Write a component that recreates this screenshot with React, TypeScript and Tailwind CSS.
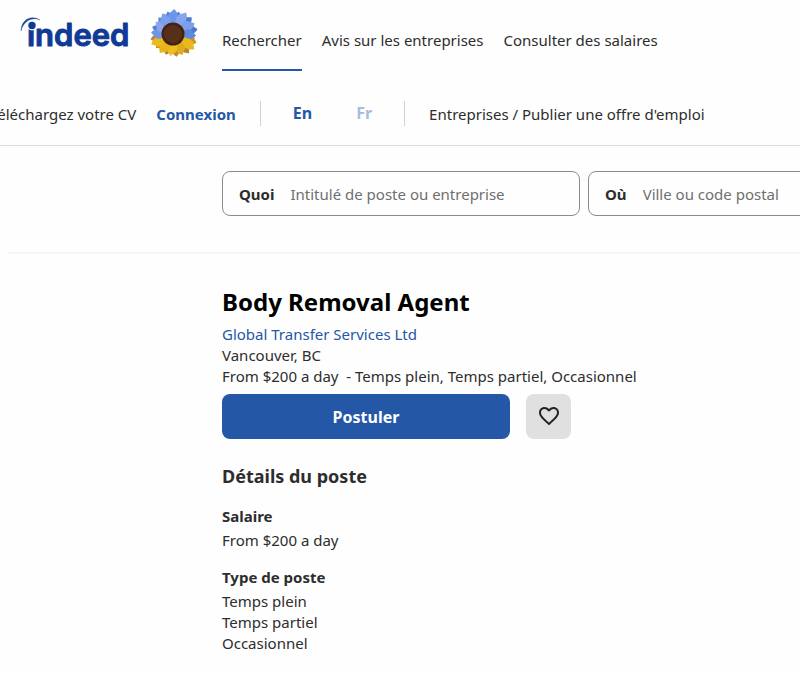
import type { FC } from "react";

// back petals come first so that the lighter front ones overlap them
const petals = [
  { angle: 12, length: 23, color: "#4f7dd6" },
  { angle: 46, length: 25, color: "#4c7ad2" },
  { angle: 76, length: 25, color: "#4f79cf" },
  { angle: 108, length: 25, color: "#c9941f" },
  { angle: 138, length: 25, color: "#bd8438" },
  { angle: 168, length: 23, color: "#c48f24" },
  { angle: 196, length: 22, color: "#b87f33" },
  { angle: 228, length: 22, color: "#c8921d" },
  { angle: 254, length: 23, color: "#b98a3a" },
  { angle: 286, length: 22, color: "#527fd6" },
  { angle: 316, length: 22, color: "#5985d9" },
  { angle: 344, length: 23, color: "#5683da" },
  { angle: 0, length: 25, color: "#6b97ea" },
  { angle: 29, length: 25, color: "#86a6ee" },
  { angle: 61, length: 24, color: "#7c9feb" },
  { angle: 91, length: 23, color: "#5d89df" },
  { angle: 123, length: 26, color: "#e9b81c" },
  { angle: 153, length: 23, color: "#dfac1d" },
  { angle: 183, length: 22, color: "#edc01f" },
  { angle: 212, length: 23, color: "#e6b41c" },
  { angle: 242, length: 24, color: "#ebbb1e" },
  { angle: 271, length: 22, color: "#6f97e6" },
  { angle: 301, length: 21, color: "#8ba6ec" },
  { angle: 330, length: 23, color: "#7b9feb" },
];

const Sunflower: FC = () => (
  <svg className="h-[50px] w-[50px]" viewBox="0 0 50 50" aria-hidden="true">
    {petals.map(({ angle, length, color }) => (
      <path
        key={angle}
        d={`M23 26L18 ${35 - length}Q18 ${30 - length} 21 ${29 - length}L24 ${26 - length}Q28 ${29 - length} 28 ${35 - length}Z`}
        fill={color}
        transform={`rotate(${angle} 23 26)`}
      />
    ))}
    <circle cx="23" cy="26" r="11.5" fill="#45230f" />
    <circle cx="23" cy="26" r="9" fill="#57301c" />
  </svg>
);

const Logo: FC = () => (
  <svg className="h-[40px] w-[110px] overflow-visible" viewBox="0 0 110 40" role="img" aria-label="indeed">
    <text
      x="7"
      y="30"
      fill="#0f3a96"
      stroke="#0f3a96"
      strokeWidth="1"
      strokeLinejoin="round"
      fontFamily="Inter, sans-serif"
      fontWeight="600"
      fontSize="31"
    >
      indeed
    </text>
    <circle cx="12" cy="9.5" r="5" fill="#fefefe" />
    <circle cx="12" cy="9.5" r="3.7" fill="#0f3a96" />
    <path d="M1 15C1 4 11-2 20 4C12 .5 3.5 5 1 15z" fill="#0f3a96" stroke="#0f3a96" strokeWidth="0.3" />
  </svg>
);

const Header: FC = () => (
  <header className="border-b border-[#dcdcdc]">
    <div className="flex h-[74px] items-start pl-5">
      <a href="#accueil" className="flex items-start">
        <span className="pt-4">
          <Logo />
        </span>
        <span className="ml-5 pt-2">
          <Sunflower />
        </span>
      </a>
      <nav className="ml-[22px] flex gap-5 whitespace-nowrap">
        <a href="#rechercher" className="h-[71px] border-b-2 border-[#2557a7] pt-[30px]">Rechercher</a>
        <a href="#avis" className="pt-[30px]">Avis sur les entreprises</a>
        <a href="#salaires" className="pt-[30px]">Consulter des salaires</a>
      </nav>
    </div>
    <div className="flex h-[71px] items-start whitespace-nowrap pt-[27px]">
      <a href="#cv" className="-ml-2.5 pt-[3px]">Téléchargez votre CV</a>
      <a href="#connexion" className="ml-5 pt-[3px] font-bold text-[#2557a7]">Connexion</a>
      <span className="ml-6 h-[25px] w-px bg-[#d4d2d0]" />
      <a href="#en" className="ml-8 pt-0.5 text-base leading-5 font-bold text-[#2557a7]">En</a>
      <a href="#fr" className="ml-11 pt-0.5 text-base leading-5 font-bold text-[#a8bcdc]">Fr</a>
      <span className="ml-8 h-[25px] w-px bg-[#d4d2d0]" />
      <a href="#entreprises" className="ml-6 pt-[3px]">Entreprises / Publier une offre d'emploi</a>
    </div>
  </header>
);

const SearchBar: FC = () => (
  <form className="ml-2 flex gap-2 overflow-hidden border-b-2 border-[#f5f5f5] pt-[25px] pb-9 pl-[214px]">
    <label className="flex h-[45px] w-[358px] shrink-0 items-center gap-4 rounded-lg border border-[#8c8c8c] px-4">
      <span className="font-bold">Quoi</span>
      <input type="text" placeholder="Intitulé de poste ou entreprise" className="min-w-0 flex-1 outline-none placeholder:text-[#6f6f6f]" />
    </label>
    <label className="flex h-[45px] w-[358px] shrink-0 items-center gap-4 rounded-lg border border-[#8c8c8c] px-4">
      <span className="font-bold">Où</span>
      <input type="text" placeholder="Ville ou code postal" className="min-w-0 flex-1 outline-none placeholder:text-[#6f6f6f]" />
    </label>
  </form>
);

const JobPosting: FC = () => (
  <main className="pt-8 pb-4 pl-[222px]">
    <h1 className="text-2xl font-bold text-black">Body Removal Agent</h1>
    <div className="mt-1.5 leading-[21px]">
      <p><a href="#entreprise" className="text-[#2557a7]">Global Transfer Services Ltd</a></p>
      <p>Vancouver, BC</p>
      <p className="whitespace-pre">From $200 a day  - Temps plein, Temps partiel, Occasionnel</p>
    </div>
    <div className="mt-[7px] flex gap-4">
      <button type="button" className="h-[45px] w-[288px] rounded-lg bg-[#2557a7] text-base font-bold text-white">
        Postuler
      </button>
      <button type="button" aria-label="Enregistrer" className="flex size-[45px] items-center justify-center rounded-lg bg-[#e0e0e0] pb-0.5">
        <svg className="size-6" viewBox="0 0 24 24" fill="#242424">
          <path d="M16.5 3c-1.74 0-3.41.81-4.5 2.09C10.91 3.81 9.24 3 7.5 3 4.42 3 2 5.42 2 8.5c0 3.78 3.4 6.86 8.55 11.54L12 21.35l1.45-1.32C18.6 15.36 22 12.28 22 8.5 22 5.42 19.58 3 16.5 3zm-4.4 15.55-.1.1-.1-.1C7.14 14.24 4 11.39 4 8.5 4 6.5 5.5 5 7.5 5c1.54 0 3.04.99 3.57 2.36h1.87C13.46 5.99 14.96 5 16.5 5c2 0 3.5 1.5 3.5 3.5 0 2.89-3.14 5.74-7.9 10.05z" />
        </svg>
      </button>
    </div>
    <h2 className="mt-6 text-lg leading-[27px] font-bold">Détails du poste</h2>
    <h3 className="mt-4 font-bold">Salaire</h3>
    <p className="mt-1 leading-[21px]">From $200 a day</p>
    <h3 className="mt-4 font-bold">Type de poste</h3>
    <ul className="mt-1 leading-[21px]">
      <li>Temps plein</li>
      <li>Temps partiel</li>
      <li>Occasionnel</li>
    </ul>
  </main>
);

export default function App() {
  return (
    <div className="min-h-screen overflow-x-hidden bg-[#fefefe] font-['Noto_Sans',sans-serif] text-[15px] leading-5 text-[#2d2d2d]">
      <Header />
      <SearchBar />
      <JobPosting />
    </div>
  );
}
